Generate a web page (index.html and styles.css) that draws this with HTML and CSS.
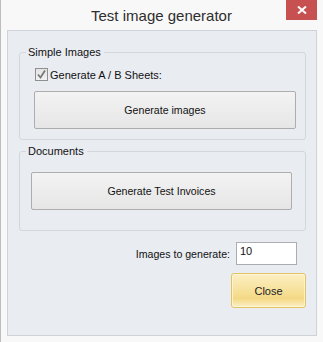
FILE: index.html
```html
<!DOCTYPE html>
<html>
<head>
<meta charset="utf-8">
<link rel="stylesheet" href="styles.css">
</head>
<body>
<div class="window">
  <div class="titlebar">
    <span class="spacer"></span>
    <span class="title">Test image generator</span>
    <span class="close-x">
      <svg width="10" height="8" viewBox="0 0 10 8"><path d="M1 0.5 L9 7.5 M9 0.5 L1 7.5" stroke="#fff" stroke-width="2"/></svg>
    </span>
  </div>
  <div class="client">
    <fieldset class="group g1">
      <legend>Simple Images</legend>
      <label class="check-row">
        <span class="checkbox"><svg width="11" height="11" viewBox="0 0 11 11"><path d="M2 5.5 L4.5 8.5 L9 1.5" stroke="#7a7a7a" stroke-width="1.8" fill="none"/></svg></span>
        <span>Generate A / B Sheets:</span>
      </label>
      <button class="btn b1">Generate images</button>
    </fieldset>
    <fieldset class="group g2">
      <legend>Documents</legend>
      <button class="btn b2">Generate Test Invoices</button>
    </fieldset>
    <div class="count-row">
      <span>Images to generate:</span>
      <span class="textbox">10</span>
    </div>
    <div class="close-row">
      <button class="close-btn">Close</button>
    </div>
  </div>
</div>
</body>
</html>
```

FILE: styles.css
```css
html, body {
  margin: 0;
  padding: 0;
}
body {
  width: 323px;
  height: 342px;
  overflow: hidden;
  font-family: "Liberation Sans", Arial, sans-serif;
}
.window {
  width: 323px;
  height: 342px;
  box-sizing: border-box;
  background: #f8f8f8;
  border-left: 1px solid #bdbdbd;
  display: flex;
  flex-direction: column;
}
.titlebar {
  height: 30px;
  display: grid;
  grid-template-columns: 1fr auto 1fr;
  align-items: start;
}
.title {
  font-size: 15px;
  color: #2e2e2e;
  padding-top: 7px;
  line-height: 17px;
  margin-left: -1px;
}
.close-x {
  justify-self: end;
  margin-right: 6px;
  width: 31px;
  height: 20px;
  background: #c75050;
  display: flex;
  align-items: center;
  justify-content: center;
}
.close-x svg { display: block; }
.client {
  flex: 1;
  margin: 0 6px 6px 6px;
  border: 1px solid #cfd2d6;
  background: #e9ecf1;
  padding: 14px 10px 0 11px;
  font-size: 10.6px;
  color: #111;
}
.group {
  margin: 0;
  border: 1px solid #d3d6da;
  border-radius: 3px;
  min-width: 0;
  display: flex;
  flex-direction: column;
  align-items: flex-start;
}
.group legend {
  padding: 0 3px 0 2px;
  line-height: 14px;
  font-size: 11px;
  color: #111;
}
.g1 legend { margin-left: -9px; }
.g2 legend { margin-left: -5px; }
.g1 {
  padding: 8px 9px 10px 15px;
}
.g2 {
  margin-top: 4px;
  padding: 13px 9px 20px 11px;
}
.check-row {
  display: flex;
  align-items: center;
  gap: 2px;
  height: 13px;
  margin-top: 1px;
  font-size: 11px;
}
.checkbox {
  width: 11px;
  height: 11px;
  border: 1px solid #8e8f8f;
  background: linear-gradient(#e4e4e4, #f2f2f2);
  display: flex;
}
.checkbox svg { display: block; }
.btn {
  font-family: inherit;
  font-size: 10.6px;
  color: #111;
  height: 38px;
  border: 1px solid #adadad;
  border-radius: 2px;
  background: linear-gradient(#f3f3f3, #e6e6e6);
  padding: 0;
}
.b1 {
  width: 262px;
  margin-top: 10px;
  margin-left: -1px;
}
.b2 {
  width: 261px;
  margin-top: 1px;
}
.count-row {
  margin-top: 11px;
  margin-right: 9px;
  display: flex;
  justify-content: flex-end;
  align-items: center;
  gap: 6px;
  font-size: 10.6px;
}
.textbox {
  height: 21px;
  background: #fff;
  border: 1px solid #abadb3;
  padding-left: 3px;
  line-height: 17px;
  font-size: 11px;
  box-sizing: content-box;
  width: 56px;
}
.close-row {
  margin-top: 8px;
  display: flex;
  justify-content: flex-end;
}
.close-btn {
  width: 75px;
  height: 35px;
  font-family: inherit;
  font-size: 11px;
  color: #222;
  border: 1px solid #e5c365;
  border-radius: 3px;
  background: linear-gradient(#fcefc4 0%, #f8e4a3 40%, #f4d985 75%, #fbf0c8 100%);
  box-shadow: inset 0 0 0 1px rgba(255,250,225,0.7);
  padding: 0;
}
```
